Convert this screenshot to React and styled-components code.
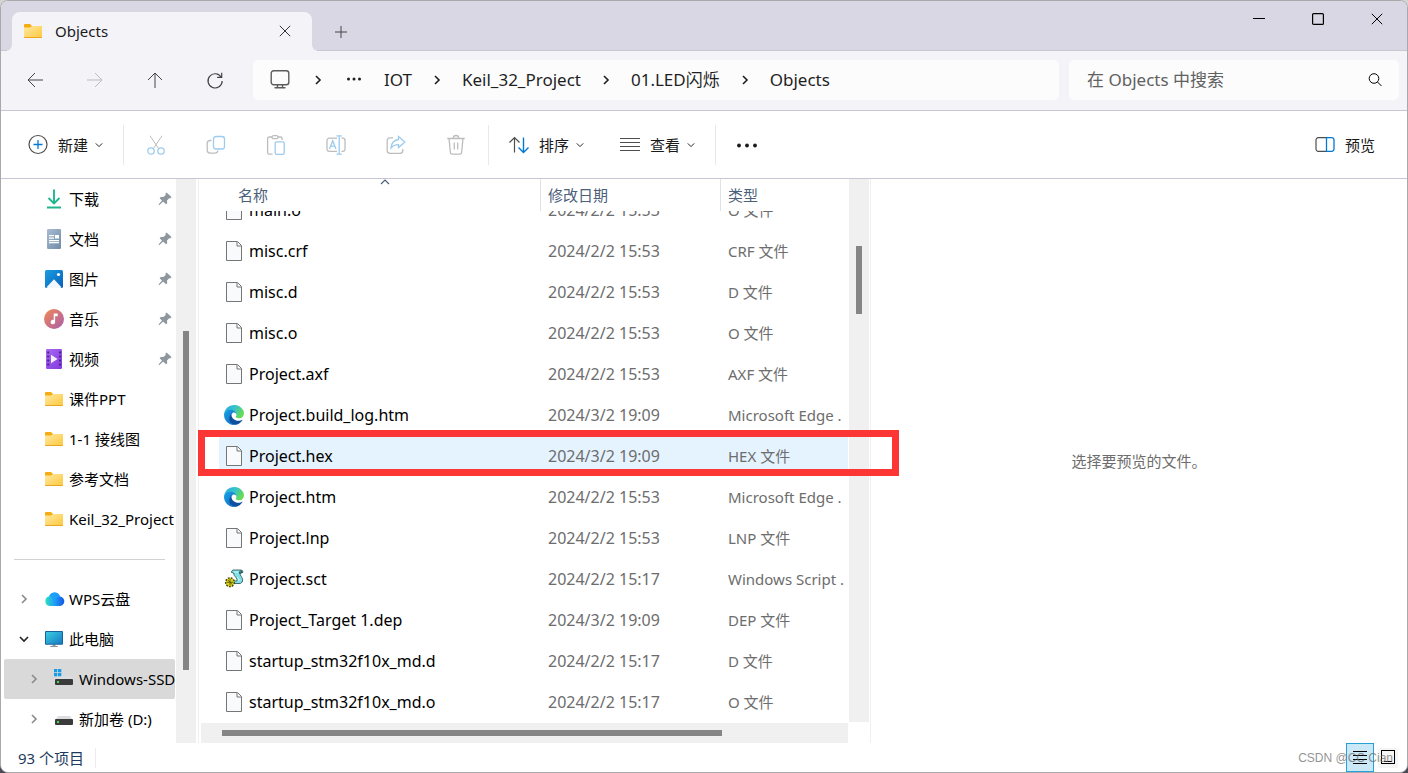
import React, { useEffect, useRef, useState } from "react";
import styled, { createGlobalStyle } from "styled-components";

const places = [
  { name: "下载", icon: "download", pinned: true },
  { name: "文档", icon: "document", pinned: true },
  { name: "图片", icon: "picture", pinned: true },
  { name: "音乐", icon: "music", pinned: true },
  { name: "视频", icon: "video", pinned: true },
  { name: "课件PPT", icon: "folder" },
  { name: "1-1 接线图", icon: "folder" },
  { name: "参考文档", icon: "folder" },
  { name: "Keil_32_Project", icon: "folder" },
];

const drives = [
  { name: "WPS云盘", icon: "cloud", level: 0 },
  { name: "此电脑", icon: "computer", level: 0, open: true },
  { name: "Windows-SSD", icon: "systemDrive", level: 1 },
  { name: "新加卷 (D:)", icon: "drive", level: 1 },
];

const files = [
  { name: "main.o", date: "2024/2/2 15:53", type: "O 文件" },
  { name: "misc.crf", date: "2024/2/2 15:53", type: "CRF 文件" },
  { name: "misc.d", date: "2024/2/2 15:53", type: "D 文件" },
  { name: "misc.o", date: "2024/2/2 15:53", type: "O 文件" },
  { name: "Project.axf", date: "2024/2/2 15:53", type: "AXF 文件" },
  { name: "Project.build_log.htm", date: "2024/3/2 19:09", type: "Microsoft Edge .", icon: "edge" },
  { name: "Project.hex", date: "2024/3/2 19:09", type: "HEX 文件" },
  { name: "Project.htm", date: "2024/2/2 15:53", type: "Microsoft Edge .", icon: "edge" },
  { name: "Project.lnp", date: "2024/2/2 15:53", type: "LNP 文件" },
  { name: "Project.sct", date: "2024/2/2 15:17", type: "Windows Script .", icon: "script" },
  { name: "Project_Target 1.dep", date: "2024/3/2 19:09", type: "DEP 文件" },
  { name: "startup_stm32f10x_md.d", date: "2024/2/2 15:17", type: "D 文件" },
  { name: "startup_stm32f10x_md.o", date: "2024/2/2 15:17", type: "O 文件" },
];

const crumbs = ["IOT", "Keil_32_Project", "01.LED闪烁", "Objects"];

export default function App() {
  const [selectedFile, setSelectedFile] = useState("Project.hex");
  const [selectedPlace, setSelectedPlace] = useState("Windows-SSD");
  const listRef = useRef(null);

  useEffect(() => {
    listRef.current.scrollTop = 22;
  }, []);

  const renderCrumb = (crumb, i) => (
    <React.Fragment key={crumb}>
      {i > 0 && (
        <CrumbArrow>
          <Chevron to="right" size={10} />
        </CrumbArrow>
      )}
      <Crumb>{crumb}</Crumb>
    </React.Fragment>
  );

  const renderPlace = (place) => (
    <TreeItem
      key={place.name}
      $level={place.level || 0}
      $pinned={place.pinned}
      $selected={place.name === selectedPlace}
      onClick={() => setSelectedPlace(place.name)}
    >
      <TreeArrow $open={place.open}>
        {place.level !== undefined && (
          <Chevron to={place.open ? "down" : "right"} size={10} />
        )}
      </TreeArrow>
      <Icon name={place.icon} />
      <TreeLabel>{place.name}</TreeLabel>
      {place.pinned && <Icon name="pin" size={14} />}
    </TreeItem>
  );

  const renderFile = (file) => (
    <FileRow
      key={file.name}
      $selected={file.name === selectedFile}
      onClick={() => setSelectedFile(file.name)}
    >
      <td>
        <FileName>
          <Icon name={file.icon || "file"} />
          {file.name}
        </FileName>
      </td>
      <td>{file.date}</td>
      <td>{file.type}</td>
    </FileRow>
  );

  return (
    <Window>
      <GlobalStyle />
      <Gradients />
      <TitleBar>
        <Tab>
          <Icon name="folder" />
          <TabTitle>Objects</TabTitle>
          <PlainButton aria-label="关闭标签页">
            <Icon name="close" size={12} />
          </PlainButton>
        </Tab>
        <NewTab aria-label="新建标签页">
          <Icon name="plus" size={12} />
        </NewTab>
        <WindowButtons>
          <WindowButton aria-label="最小化">
            <Icon name="minimize" size={12} />
          </WindowButton>
          <WindowButton aria-label="最大化">
            <Icon name="maximize" size={12} />
          </WindowButton>
          <WindowButton aria-label="关闭">
            <Icon name="close" size={12} />
          </WindowButton>
        </WindowButtons>
      </TitleBar>

      <NavBar>
        <NavButtons>
          <NavButton aria-label="后退">
            <Icon name="back" size={16} />
          </NavButton>
          <NavButton aria-label="前进" disabled>
            <Icon name="forward" size={16} />
          </NavButton>
          <NavButton aria-label="向上">
            <Icon name="up" size={16} />
          </NavButton>
          <NavButton aria-label="刷新">
            <Icon name="refresh" size={16} />
          </NavButton>
        </NavButtons>
        <AddressBar aria-label="路径">
          <Icon name="monitor" />
          <CrumbArrow $wide>
            <Chevron to="right" size={10} />
          </CrumbArrow>
          <Overflow aria-label="更多">
            <Icon name="dots" size={16} />
          </Overflow>
          {crumbs.map(renderCrumb)}
        </AddressBar>
        <SearchBox>
          <SearchInput
            type="text"
            aria-label="搜索"
            placeholder="在 Objects 中搜索"
          />
          <Icon name="search" size={16} />
        </SearchBox>
      </NavBar>

      <ToolBar>
        <ToolButton>
          <Icon name="add" />
          新建
          <Chevron to="down" size={8} light />
        </ToolButton>
        <ToolDivider />
        <IconGroup>
          {["cut", "copy", "paste", "rename", "share", "trash"].map((name) => (
            <IconButton key={name} aria-label={name} disabled>
              <Icon name={name} />
            </IconButton>
          ))}
        </IconGroup>
        <ToolDivider />
        <ToolButton>
          <Icon name="sort" />
          排序
          <Chevron to="down" size={8} light />
        </ToolButton>
        <ToolButton>
          <Icon name="lines" />
          查看
          <Chevron to="down" size={8} light />
        </ToolButton>
        <ToolDivider />
        <ToolButton aria-label="更多选项">
          <Icon name="more" />
        </ToolButton>
        <PreviewButton>
          <Icon name="panel" />
          预览
        </PreviewButton>
      </ToolBar>

      <Body>
        <Sidebar>
          <Tree>
            {places.map(renderPlace)}
            <TreeDivider />
            {drives.map(renderPlace)}
          </Tree>
          <Track $before={152} $after={73}>
            <Thumb $size={339} />
          </Track>
        </Sidebar>
        <FilePane>
          <ListArea>
            <FileList ref={listRef}>
              <FileTable>
                <colgroup>
                  <col className="name" />
                  <col className="date" />
                  <col />
                </colgroup>
                <thead>
                  <tr>
                    <th>
                      名称
                      <SortMark>
                        <Chevron to="up" size={10} light />
                      </SortMark>
                    </th>
                    <th>修改日期</th>
                    <th>类型</th>
                  </tr>
                </thead>
                <tbody>{files.map(renderFile)}</tbody>
              </FileTable>
            </FileList>
            <Track $before={67} $after={408}>
              <Thumb $size={68} />
            </Track>
          </ListArea>
          <BottomTrack $before={21} $after={126}>
            <Thumb $size={500} />
          </BottomTrack>
          <Highlight />
        </FilePane>
        <PreviewPane>选择要预览的文件。</PreviewPane>
      </Body>

      <StatusBar>
        <ItemCount>93 个项目</ItemCount>
        <ViewButton $active aria-label="详细信息">
          <Icon name="details" size={16} />
        </ViewButton>
        <ViewButton aria-label="大图标">
          <Icon name="thumbnails" size={16} />
        </ViewButton>
        <Watermark>CSDN @CC Cian</Watermark>
      </StatusBar>
    </Window>
  );
}

const chevrons = {
  right: "M3 1 7 5 3 9",
  down: "M1 3 5 7 9 3",
  up: "M1 7 5 3 9 7",
};

const Chevron = ({ to, size, light }) => (
  <Svg
    width={size}
    height={size}
    viewBox="0 0 10 10"
    strokeWidth={light ? 1.2 : 1.6}
  >
    <path d={chevrons[to]} />
  </Svg>
);

const Icon = ({ name, size = 20 }) => (
  <Svg width={size} height={size} viewBox={`0 0 ${size} ${size}`}>
    {icons[name]}
  </Svg>
);

const driveBody = (
  <>
    <path d="M4 7h12l3 4H1z" fill="#dcdde0" stroke="none" />
    <rect x="1" y="10" width="18" height="6" rx="1" fill="#3b3b3b" stroke="none" />
    <rect x="3" y="12" width="2" height="2" fill="#3fe04f" stroke="none" />
  </>
);

const icons = {
  folder: (
    <g stroke="none">
      <path d="M1 4a1 1 0 0 1 1-1h5l2 2v3H1z" fill="#f5ac12" />
      <path d="M1 6.500h6l2-1.500h10V16a1 1 0 0 1-1 1H2a1 1 0 0 1-1-1z" fill="url(#folder)" />
      <path d="M1 16h18a1 1 0 0 1-1 1H2a1 1 0 0 1-1-1z" fill="#e9a51e" />
    </g>
  ),
  close: <path d="M.8.8l10.400 10.400M11.200.8.8 11.200" />,
  plus: <path d="M6 0v12M0 6h12" />,
  minimize: <path d="M0 5.5h12" />,
  maximize: <rect x=".6" y=".6" width="10.800" height="10.800" rx="1" strokeWidth="1.200" />,
  back: <path d="M16 8H1.2M8 1 1 8l7 7" />,
  forward: <path d="M0 8h14.8M8 1l7 7-7 7" />,
  up: <path d="M8 16V1.2M1 8l7-7 7 7" />,
  refresh: <path d="M14.2 5.2A7.1 7.1 0 1 0 15.2 9M14.7.8v4.6h-4.6" strokeWidth="1.2" />,
  monitor: (
    <g stroke="#5c5c5c" strokeWidth="1.4">
      <rect x="1.2" y=".7" width="17.6" height="14" rx="2.5" />
      <path d="M7.5 15v2.5M12.500 15v2.5M4.5 17.800h11" />
    </g>
  ),
  dots: (
    <g fill="currentColor" stroke="none">
      <circle cx="2.5" cy="7" r="1.5" />
      <circle cx="8" cy="7" r="1.5" />
      <circle cx="13.5" cy="7" r="1.5" />
    </g>
  ),
  search: (
    <>
      <circle cx="7" cy="6.5" r="4.8" />
      <path d="m10.5 10 4 4" />
    </>
  ),
  add: (
    <>
      <circle cx="10" cy="9.5" r="9" stroke="#4d4d4d" strokeWidth="1.2" />
      <path d="M10 5v9M5.5 9.5h9" stroke="#0078d4" strokeWidth="1.3" />
    </>
  ),
  cut: (
    <>
      <path d="M4 .8 12.6 13.5M16 .8 7.4 13.5" stroke="#bdbdbd" />
      <circle cx="5" cy="16" r="3.2" stroke="#9ccbee" strokeWidth="1.3" />
      <circle cx="15" cy="16" r="3.2" stroke="#9ccbee" strokeWidth="1.3" />
    </>
  ),
  copy: (
    <g strokeWidth="1.3">
      <path d="M5.5 5.5H4a2.8 2.8 0 0 0-2.8 2.8v7A2.8 2.8 0 0 0 4 18.100h5a2.8 2.8 0 0 0 2.8-2.6" stroke="#bdbdbd" />
      <rect x="7.5" y="1.5" width="11" height="12.5" rx="2.5" stroke="#9ccbee" />
    </g>
  ),
  paste: (
    <g strokeWidth="1.3">
      <path d="M6 2H3.2a1.6 1.6 0 0 0-1.6 1.6v13.900a1.6 1.6 0 0 0 1.6 1.6h3.3M12 2h2.5a1.6 1.6 0 0 1 1.6 1.6V5" stroke="#bdbdbd" />
      <rect x="6" y=".7" width="6" height="3" rx="1.5" stroke="#bdbdbd" />
      <rect x="9.2" y="6.8" width="9" height="12.5" rx="1.2" stroke="#9ccbee" />
    </g>
  ),
  rename: (
    <g strokeWidth="1.3">
      <path d="M11 3.2H3.2A2.2 2.2 0 0 0 1 5.4v8.8a2.2 2.2 0 0 0 2.2 2.2H11M15.5 3.2h1.3A2.2 2.2 0 0 1 19 5.4v8.8a2.2 2.2 0 0 1-2.2 2.2h-1.3" stroke="#bdbdbd" />
      <path d="m3.5 14 3.2-8.3L10 14M4.6 11.2h4.3M13.2 1v18M10.500.8h5.400M10.5 19.200h5.4" stroke="#9ccbee" />
    </g>
  ),
  share: (
    <g strokeWidth="1.3">
      <path d="M7 2.8H4a2.8 2.8 0 0 0-2.8 2.8v10A2.8 2.8 0 0 0 4 18.400h10a2.8 2.8 0 0 0 2.8-2.8V14" stroke="#bdbdbd" />
      <path d="M12.5 1.5 18.800 7l-6.300 5.500V9.700c-3.500 0-5.500 1-7.500 3.500.2-4.500 3-8 7.500-8.700z" stroke="#9ccbee" />
    </g>
  ),
  trash: (
    <path
      d="M1.200 3.500h17.600M7.300 3.200a2.700 2.700 0 0 1 5.400 0M3 3.500l1.400 14a1.700 1.700 0 0 0 1.700 1.600h7.800a1.700 1.700 0 0 0 1.700-1.600L17 3.500M8.300 7.500v7M11.700 7.500v7"
      stroke="#bdbdbd"
      strokeWidth="1.3"
    />
  ),
  sort: (
    <>
      <path d="M5.500 17.500V2.500M.5 7.500l5-5 5 5" stroke="#4d4d4d" strokeWidth="1.2" />
      <path d="M14.500 2.500v15M9.500 12.500l5 5 5-5" stroke="#0078d4" strokeWidth="1.4" />
    </>
  ),
  lines: <path d="M0 3.500h20M0 7.500h20M0 11.500h20M0 15.500h20" stroke="#4d4d4d" />,
  more: (
    <g fill="#1a1a1a" stroke="none">
      <circle cx="3" cy="10.500" r="1.900" />
      <circle cx="11" cy="10.500" r="1.900" />
      <circle cx="19" cy="10.500" r="1.900" />
    </g>
  ),
  panel: (
    <>
      <path d="M11 2.700H3.300A2.300 2.300 0 0 0 1 5v9a2.300 2.300 0 0 0 2.300 2.300H11" stroke="#4d4d4d" strokeWidth="1.2" />
      <path d="M11.500 2.700h5A2.300 2.300 0 0 1 19 5v9a2.300 2.300 0 0 1-2.300 2.300h-5.200z" stroke="#0078d4" strokeWidth="1.3" />
    </>
  ),
  pin: (
    <path d="M8.500.5 13.500 5l-1 1.200h-1.300L9 8.400l.2 2.800-1.300 1.100-2.800-2.800L1.500 13l-.9.300.2-1L4 8.600 1.600 6.200 2.700 5l2.800.1 2.200-2.200-.2-1.400z" fill="#8e979d" stroke="none" />
  ),
  download: (
    <path d="M10 .5v13.500M4.500 9l5.500 5.500L15.500 9M3 18.500h14" stroke="#1fb58f" strokeWidth="1.900" />
  ),
  document: (
    <g stroke="none">
      <rect x="3" y="0" width="14" height="20" rx="1.200" fill="url(#document)" />
      <path d="M5 6h5v1.300H5zM5 8.500h5v1.300H5zM5 11h10v1.200H5zM5 13h10v1.200H5zM11 6h4v3.600h-4z" fill="#fff" />
    </g>
  ),
  picture: (
    <g stroke="none">
      <rect x="1" y="1" width="18" height="18" rx="1.500" fill="url(#picture)" />
      <path d="m2.500 18.300 7.500-8 7.500 8q-.5.700-1.500.7H4q-1 0-1.500-.7z" fill="#f2f8fd" />
      <circle cx="14.500" cy="5.500" r="1.600" fill="#fff" />
    </g>
  ),
  music: (
    <g stroke="none">
      <circle cx="10" cy="10" r="10" fill="url(#music)" />
      <path d="M9.700 4.500h4v2.800h-2.600V13a2.200 2.200 0 1 1-1.400-2z" fill="#fff" />
    </g>
  ),
  video: (
    <g stroke="none">
      <rect x="2" y="0" width="16" height="20" rx="1.200" fill="url(#video)" />
      <path d="M3.200 2.500h2v2h-2zM3.200 6.500h2v2h-2zM3.200 10.500h2v2h-2zM3.200 14.500h2v2h-2zM15 2.500h2v2h-2zM15 6.500h2v2h-2zM15 10.500h2v2h-2zM15 14.500h2v2h-2z" fill="#4d248f" />
      <path d="M7 5.800 13.500 10 7 14.200z" fill="#f4eefc" />
    </g>
  ),
  cloud: (
    <g stroke="none">
      <path d="M5.500 17a5 5 0 0 1-.3-9.800A5.800 5.800 0 0 1 16 7.400a4.800 4.800 0 0 1-1 9.600z" fill="url(#cloud)" />
      <path d="M9.800 13.800a5.500 5.500 0 0 0-4.600-6.600A5.800 5.800 0 0 1 16 7.400q-4 .3-6.200 6.400z" fill="#1ca0fa" opacity=".8" />
    </g>
  ),
  computer: (
    <g stroke="none">
      <path d="M8.500 15.500h3V17h2.300v1H6.200v-1h2.300z" fill="#8d979e" />
      <rect x="1" y="2" width="18" height="13.700" rx="1" fill="#17649c" />
      <rect x="2" y="3" width="16" height="11.700" fill="url(#screen)" />
    </g>
  ),
  drive: driveBody,
  systemDrive: (
    <>
      {driveBody}
      <path d="M0 0h3.300v3.300H0zM4 0h3.300v3.300H4zM0 4h3.300v3.300H0zM4 4h3.300v3.300H4z" fill="#1a9be6" stroke="none" />
    </>
  ),
  file: (
    <g stroke="#757575">
      <path d="M2.500.5h11l4 4v15h-15z" fill="#f9fafb" />
      <path d="M13 1v4h4" />
    </g>
  ),
  edge: (
    <g stroke="none" transform="scale(.078) translate(-4.6 -5)">
      <path d="M235.680 195.460a93.730 93.730 0 0 1-10.540 4.710 101.870 101.870 0 0 1-35.900 6.460c-47.320 0-88.540-32.550-88.540-74.320A31.480 31.480 0 0 1 117.130 105c-42.800 1.800-53.800 46.400-53.800 72.530 0 73.880 68.090 81.370 82.760 81.370 7.910 0 19.840-2.300 27-4.560l1.310-.44a128.340 128.340 0 0 0 66.600-52.800 4 4 0 0 0-5.320-5.640z" fill="#0f4fa0" />
      <path d="M110.340 246.340A79.200 79.200 0 0 1 87.600 225a80.720 80.720 0 0 1 29.530-120c3.120-1.470 8.450-4.130 15.540-4a32.350 32.350 0 0 1 25.690 13 31.880 31.880 0 0 1 6.360 18.660c0-.21 24.460-79.600-80-79.600-43.900 0-80 41.660-80 78.210a130.150 130.150 0 0 0 12.110 56 128 128 0 0 0 156.380 67.110 75.550 75.550 0 0 1-62.780-8z" fill="url(#edgeBlue)" />
      <path d="M156.940 153.780c-.81 1.050-3.300 2.500-3.300 5.660 0 2.610 1.700 5.120 4.720 7.230 14.380 10 41.490 8.680 41.560 8.680a59.560 59.560 0 0 0 30.270-8.350 61.380 61.380 0 0 0 30.440-52.900c.26-22.410-8-37.310-11.340-43.910C228.090 28.760 182.350 4.900 132.610 4.900a128 128 0 0 0-128 126.200c.48-36.540 36.800-66.050 80-66.050 3.500 0 23.460.34 42 10.070 16.340 8.580 24.900 18.940 30.850 29.210 6.180 10.670 7.280 24.150 7.280 29.520s-2.740 13.330-7.800 19.930z" fill="url(#edgeGreen)" />
    </g>
  ),
  script: (
    <g strokeWidth=".8" stroke="#1f4d52">
      <path d="M9 1h8q2 .3 2 2.300l-3 1q0 1.700 1.300 3.200 2.200 2.500 1 5.500l-2 1.500H8q-1.500-1-.5-2.500h5.200q1-1.500-.7-3.500Q9.500 6.500 9.700 4L7.500 3.500Q7.300 1.700 9 1z" fill="#7fe0e6" />
      <path d="M16.800 1.700q1.500.5 1.200 2l-2.500.7q-.5-2 1.300-2.700z" fill="#6f7f80" />
      <path d="M10 3h4M13 8q2.500 2 2 4" stroke="#e8ffff" />
      <circle cx="6" cy="13.300" r="4.400" fill="#d8cf1c" stroke="#3f3c05" strokeWidth="1.3" strokeDasharray="1.8 1.2" />
      <path d="M6 10v6.600M2.800 13.300h6.400M3.800 11l4.500 4.600" stroke="#4f4b08" />
    </g>
  ),
  details: <path d="M1 1.500h14M1 5.500h14M1 9.500h14M1 13.500h14" stroke="#000" />,
  thumbnails: (
    <g stroke="#000">
      <rect x="1.5" y=".5" width="13" height="13" />
      <path d="M4 11.500h8" />
    </g>
  ),
};

const Gradients = () => (
  <Defs aria-hidden="true">
    <defs>
      <linearGradient id="folder" x1="0" y1="0" x2="1" y2="1">
        <stop offset="0" stopColor="#ffe9a2" />
        <stop offset="1" stopColor="#fdc83e" />
      </linearGradient>
      <linearGradient id="document" x1="0" y1="0" x2="1" y2="1">
        <stop offset="0" stopColor="#a9bdd2" />
        <stop offset="1" stopColor="#6f8ba8" />
      </linearGradient>
      <linearGradient id="picture" x1="0" y1="0" x2="1" y2="1">
        <stop offset="0" stopColor="#189ee3" />
        <stop offset="1" stopColor="#0a5fb8" />
      </linearGradient>
      <linearGradient id="music" x1="0" y1="0" x2="1" y2="1">
        <stop offset="0" stopColor="#f28a55" />
        <stop offset="1" stopColor="#a95cae" />
      </linearGradient>
      <linearGradient id="video" x1="0" y1="0" x2="1" y2="1">
        <stop offset="0" stopColor="#a66af0" />
        <stop offset="1" stopColor="#8439de" />
      </linearGradient>
      <linearGradient id="cloud" x1="0" y1="0" x2="1" y2="0">
        <stop offset="0" stopColor="#2fe0c0" />
        <stop offset=".5" stopColor="#1f9cf7" />
        <stop offset="1" stopColor="#1256e4" />
      </linearGradient>
      <linearGradient id="screen" x1="0" y1="0" x2="1" y2="1">
        <stop offset="0" stopColor="#38cfe0" />
        <stop offset="1" stopColor="#1779c6" />
      </linearGradient>
      <linearGradient id="edgeBlue" x1="0" y1="0" x2="1" y2="1">
        <stop offset="0" stopColor="#1ba3e8" />
        <stop offset="1" stopColor="#0b66bd" />
      </linearGradient>
      <linearGradient id="edgeGreen" x1="0" y1="0" x2="1" y2=".5">
        <stop offset="0" stopColor="#2aa9dd" />
        <stop offset=".5" stopColor="#35c1cf" />
        <stop offset="1" stopColor="#66dc55" />
      </linearGradient>
    </defs>
  </Defs>
);

const GlobalStyle = createGlobalStyle`
  * {
    box-sizing: border-box;
  }

  body {
    margin: 0;
    background: linear-gradient(#d4d4d4, #4a4852);
    color: #000;
    font: 15px/20px "Noto Sans", "Noto Sans CJK SC", sans-serif;
  }

  button {
    padding: 0;
    border: 0;
    background: none;
    color: inherit;
    font: inherit;
  }
`;

const Svg = styled.svg`
  display: block;
  flex: none;
  overflow: visible;
  fill: none;
  stroke: currentColor;
`;

const Defs = styled.svg`
  position: absolute;
  width: 0;
  height: 0;
`;

const Window = styled.div`
  display: flex;
  flex-direction: column;
  height: 100vh;
  overflow: hidden;
  border: 1px solid #a9a9ab;
  border-radius: 8px;
  background: #fff;
`;

const TitleBar = styled.header`
  display: flex;
  height: 50px;
  flex: none;
  padding: 11px 0 0 11px;
  background: #d9d7e3;
  box-shadow: inset 0 -1px #c9c7d3;
`;

const Tab = styled.div`
  position: relative;
  display: flex;
  align-items: center;
  width: 300px;
  padding: 0 21px 2px 11px;
  border-radius: 8px 8px 0 0;
  background: #f4f3f8;

  &::before,
  &::after {
    content: "";
    position: absolute;
    bottom: 0;
    width: 5px;
    height: 5px;
  }

  &::before {
    right: 100%;
    background: radial-gradient(circle at 0 0, #d9d7e3 4px, #f4f3f8 5px);
  }

  &::after {
    left: 100%;
    background: radial-gradient(circle at 100% 0, #d9d7e3 4px, #f4f3f8 5px);
  }
`;

const TabTitle = styled.span`
  flex: 1;
  padding-left: 12px;
  color: #1a1a1a;
`;

const PlainButton = styled.button`
  color: #333;
`;

const NewTab = styled.button`
  padding: 0 23px;
  color: #444;
`;

const WindowButtons = styled.div`
  display: flex;
  align-items: flex-start;
  margin: 0 1px 0 auto;
`;

const WindowButton = styled.button`
  display: flex;
  justify-content: center;
  width: 59px;
  padding-top: 1px;
`;

const NavBar = styled.nav`
  display: flex;
  align-items: center;
  height: 60px;
  flex: none;
  padding: 0 8px 1px 4px;
  border-bottom: 1px solid #c8c6d4;
  background: #f4f3f8;
  font-size: 17px;
  line-height: 24px;
`;

const NavButtons = styled.div`
  display: flex;
  margin-right: 8px;
`;

const NavButton = styled.button`
  display: flex;
  justify-content: center;
  width: 60px;
  color: #444;

  &:disabled {
    color: #bbb;
  }
`;

const AddressBar = styled.div`
  display: flex;
  align-items: center;
  flex: 1;
  height: 40px;
  margin-right: 10px;
  padding-left: 17px;
  border-radius: 5px;
  background: #fcfcfd;
  color: #1f1f1f;
`;

const CrumbArrow = styled.span`
  display: flex;
  justify-content: center;
  width: ${(props) => (props.$wide ? "56px" : "50px")};
`;

const Overflow = styled.button`
  margin-right: 22px;
`;

const Crumb = styled.button`
  white-space: nowrap;
`;

const SearchBox = styled.label`
  display: flex;
  align-items: center;
  width: 330px;
  height: 40px;
  padding: 0 16px 0 18px;
  border-radius: 5px;
  background: #fcfcfd;
`;

const SearchInput = styled.input`
  flex: 1;
  min-width: 0;
  padding: 0;
  border: 0;
  outline: 0;
  background: none;
  font: inherit;

  &::placeholder {
    color: #616161;
  }
`;

const ToolBar = styled.div`
  display: flex;
  align-items: center;
  height: 68px;
  flex: none;
  padding: 0 14px 0 9px;
  border-bottom: 1px solid #c8c6d4;
`;

const ToolButton = styled.button`
  display: flex;
  align-items: center;
  gap: 10px;
  height: 40px;
  padding: 0 18px;
  color: #1a1a1a;

  svg:last-child:not(:first-child) {
    margin-left: -3px;
  }
`;

const PreviewButton = styled(ToolButton)`
  margin-left: auto;
`;

const ToolDivider = styled.span`
  width: 1px;
  height: 40px;
  margin: 0 2px;
  background: #e8e8e8;
`;

const IconGroup = styled.div`
  display: flex;
`;

const IconButton = styled.button`
  display: flex;
  justify-content: center;
  width: 60px;
`;

const Body = styled.main`
  display: flex;
  flex: 1;
  min-height: 0;
`;

const Sidebar = styled.aside`
  display: flex;
  width: 195px;
  flex: none;
`;

const Tree = styled.div`
  flex: 1;
  min-width: 0;
  overflow: hidden;
  padding: 0 1px 0 3px;
`;

const TreeItem = styled.button`
  display: flex;
  align-items: center;
  width: 100%;
  height: 40px;
  padding-left: ${(props) => props.$level * 10}px;
  padding-right: ${(props) => (props.$pinned ? 3 : 0)}px;
  border-radius: 2px;
  background: ${(props) => (props.$selected ? "#d9d9d9" : "none")};
  text-align: left;
`;

const TreeArrow = styled.span`
  display: flex;
  justify-content: center;
  width: 40px;
  flex: none;
  color: ${(props) => (props.$open ? "#222" : "#8a8a8a")};
`;

const TreeLabel = styled.span`
  flex: 1;
  overflow: hidden;
  padding-left: 5px;
  white-space: nowrap;
`;

const TreeDivider = styled.hr`
  height: 1px;
  margin: 20px 10px 19px;
  border: 0;
  background: #d2d2d2;
`;

const Track = styled.div`
  display: flex;
  flex-direction: column;
  flex: none;
  width: 20px;
  padding: 0 7px;
  background: #f0f0f0;

  &::before,
  &::after {
    content: "";
    flex: ${(props) => props.$before} 1 0;
  }

  &::after {
    flex-grow: ${(props) => props.$after};
  }
`;

const BottomTrack = styled(Track)`
  flex-direction: row;
  width: auto;
  height: 20px;
  margin: 1px 22px 0 2px;
  padding: 7px 0;
`;

const Thumb = styled.div`
  flex: ${(props) => props.$size} 1 0;
  background: #858585;
`;

const FilePane = styled.section`
  position: relative;
  display: flex;
  flex-direction: column;
  flex: 0 1 673px;
  min-width: 0;
  margin-left: 2px;
  border: solid #f0f0f0;
  border-width: 0 1px;
`;

const ListArea = styled.div`
  display: flex;
  gap: 1px;
  flex: 1;
  min-height: 0;
  padding-right: 1px;
`;

const FileList = styled.div`
  flex: 1;
  min-width: 0;
  overflow: hidden;
  padding-left: 20px;
`;

const FileTable = styled.table`
  width: 100%;
  table-layout: fixed;
  border-collapse: separate;
  border-spacing: 0;

  .name {
    width: 322px;
  }

  .date {
    width: 180px;
  }

  th {
    position: sticky;
    top: 0;
    height: 32px;
    padding: 0 0 0 7px;
    border-right: 1px solid #e2e2e2;
    background: #fff;
    color: #4c607a;
    font-weight: 400;
    text-align: left;
  }

  th:first-child {
    padding-left: 19px;
  }

  th:last-child {
    border-right: 0;
  }

  td {
    height: 41px;
    overflow: hidden;
    padding: 0 0 0 7px;
    color: #6d6d6d;
    font-size: 16px;
    white-space: nowrap;
  }

  td:first-child {
    padding-left: 5px;
    color: #000;
  }

  td:last-child {
    font-size: 15px;
  }
`;

const FileRow = styled.tr`
  background: ${(props) => (props.$selected ? "#e5f3ff" : "#fff")};
`;

const FileName = styled.span`
  display: flex;
  align-items: center;
  gap: 5px;
`;

const SortMark = styled.span`
  position: absolute;
  top: -2px;
  left: 50%;
`;

// marks the hex file that gets flashed to the board
const Highlight = styled.div`
  position: absolute;
  top: 251px;
  left: -1px;
  right: -29px;
  height: 46px;
  border: 7px solid #fc3535;
  pointer-events: none;
`;

const PreviewPane = styled.section`
  display: flex;
  align-items: center;
  justify-content: center;
  flex: 1;
  color: #6d6d6d;
`;

const StatusBar = styled.footer`
  position: relative;
  display: flex;
  align-items: center;
  gap: 4px;
  height: 29px;
  flex: none;
  padding: 0 9px 0 17px;
`;

const ItemCount = styled.span`
  margin-right: auto;
  padding-right: 11px;
  border-right: 1px solid #ececec;
  color: #1e3b5e;
`;

const ViewButton = styled.button`
  display: flex;
  align-items: center;
  justify-content: center;
  width: ${(props) => (props.$active ? "28px" : "20px")};
  height: ${(props) => (props.$active ? "29px" : "20px")};
  border: ${(props) => (props.$active ? "1px solid #26a0da" : "0")};
  background: ${(props) => (props.$active ? "#cbe8f6" : "#f5f5f5")};
`;

const Watermark = styled.span`
  position: absolute;
  right: 14px;
  top: 5px;
  color: rgba(110, 110, 110, 0.75);
  font: 12px/20px "Liberation Sans", sans-serif;
`;
